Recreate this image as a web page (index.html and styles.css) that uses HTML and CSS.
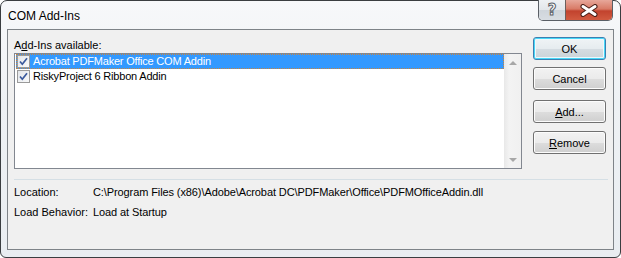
FILE: index.html
```html
<!DOCTYPE html>
<html lang="en">
<head>
  <meta charset="UTF-8" />
  <title>COM Add-Ins</title>
  <link rel="stylesheet" href="styles.css">
</head>
<body>
  <div class="window">
    <div class="titlebar">
      <span class="caption">COM Add-Ins</span>
    </div>
    <div class="caption-buttons">
      <div class="cap-btn help"><span>?</span></div>
      <div class="cap-btn close">
        <svg width="20" height="13" viewBox="0 0 20 13">
          <path d="M4 2.5 L16 10.5 M16 2.5 L4 10.5" stroke="#4a1f17" stroke-width="5" stroke-linecap="round"/>
          <path d="M4 2.5 L16 10.5 M16 2.5 L4 10.5" stroke="#ffffff" stroke-width="3" stroke-linecap="round"/>
        </svg>
      </div>
    </div>

    <div class="client">
      <div class="top-row">
        <div class="list-col">
          <div class="label">A<u>d</u>d-Ins available:</div>
          <div class="listbox">
            <div class="items">
              <div class="item selected">
                <span class="check">
                  <svg width="11" height="11" viewBox="0 0 11 11"><path d="M2 5.5 L4.3 8.2 L9 2.2" fill="none" stroke="#3a5a9e" stroke-width="1.7"/></svg>
                </span>
                <span class="item-text">Acrobat PDFMaker Office COM Addin</span>
              </div>
              <div class="item">
                <span class="check">
                  <svg width="11" height="11" viewBox="0 0 11 11"><path d="M2 5.5 L4.3 8.2 L9 2.2" fill="none" stroke="#3a5a9e" stroke-width="1.7"/></svg>
                </span>
                <span class="item-text">RiskyProject 6 Ribbon Addin</span>
              </div>
            </div>
            <div class="scrollbar">
              <div class="arrow up"></div>
              <div class="arrow down"></div>
            </div>
          </div>
        </div>
        <div class="btn-col">
          <button class="btn default">OK</button>
          <button class="btn cancel">Cancel</button>
          <button class="btn add"><u>A</u>dd...</button>
          <button class="btn remove"><u>R</u>emove</button>
        </div>
      </div>

      <div class="separator"></div>

      <div class="info">
        <span>Location:</span>
        <span class="value">C:\Program Files (x86)\Adobe\Acrobat DC\PDFMaker\Office\PDFMOfficeAddin.dll</span>
        <span>Load Behavior:</span>
        <span class="value">Load at Startup</span>
      </div>
    </div>
  </div>
</body>
</html>
```

FILE: styles.css
```css
body {
  margin: 0;
  background: #ffffff;
  font-family: "Liberation Sans", Arial, sans-serif;
  font-size: 11px;
  color: #000000;
}
.window {
  position: relative;
  width: 621px;
  height: 258px;
  box-sizing: border-box;
  border: 1px solid #3a3d40;
  border-radius: 7px 7px 6px 6px;
  background: linear-gradient(to bottom, #f7f8fa 0%, #eef1f4 40%, #e9edf1 100%);
  padding: 0 6px 7px 6px;
  display: flex;
  flex-direction: column;
}
.titlebar {
  height: 28px;
  display: flex;
  align-items: center;
  padding: 2px 0 0 1px;
  box-sizing: border-box;
}
.caption {
  font-size: 12px;
  color: #000000;
  text-shadow: 0 0 6px #ffffff, 0 0 3px #ffffff;
}
.caption-buttons {
  position: absolute;
  top: -1px;
  right: 7px;
  display: flex;
  height: 20px;
  border: 1px solid #5a5f66;
  border-top: none;
  border-radius: 0 0 5px 5px;
  overflow: hidden;
}
.cap-btn {
  display: flex;
  align-items: center;
  justify-content: center;
  box-sizing: border-box;
}
.help {
  width: 27px;
  background: linear-gradient(to bottom, #eef1f4 0%, #e2e6ea 50%, #cfd5db 51%, #d8dde2 100%);
  border-right: 1px solid #6b5f5c;
}
.help span {
  font-family: "DejaVu Sans", sans-serif;
  font-weight: bold;
  font-size: 15px;
  line-height: 15px;
  color: #ffffff;
  -webkit-text-stroke: 1px #5b6169;
}
.close {
  width: 46px;
  background: linear-gradient(to bottom, #e7a79a 0%, #d87a66 45%, #c2432e 55%, #d15a40 100%);
}
.client {
  flex: 1;
  border: 1px solid #7e8388;
  background: #f0f0f0;
  padding: 7px 7px 0 6px;
  display: flex;
  flex-direction: column;
}
.top-row {
  display: flex;
}
.list-col {
  width: 508px;
  display: flex;
  flex-direction: column;
}
.label {
  line-height: 15px;
  margin-top: 1px;
}
.listbox {
  height: 116px;
  box-sizing: border-box;
  border: 1px solid #828790;
  background: #ffffff;
  display: flex;
}
.items {
  flex: 1;
  padding-left: 1px;
}
.item {
  height: 15px;
  box-sizing: border-box;
  display: flex;
  align-items: center;
  border: 1px solid transparent;
}
.item.selected {
  background: #3399ff;
  border: 1px dotted #c9843c;
  color: #ffffff;
}
.check {
  width: 13px;
  height: 13px;
  box-sizing: border-box;
  border: 1px solid #9a9a9a;
  background: linear-gradient(135deg, #e3e6ea 0%, #f8f9fa 100%);
  display: flex;
  align-items: center;
  justify-content: center;
}
.item-text {
  margin-left: 3px;
  line-height: 13px;
  letter-spacing: -0.2px;
}
.scrollbar {
  width: 17px;
  background: linear-gradient(to right, #e8e8e8 0%, #f3f3f3 30%, #f0f0f0 100%);
  display: flex;
  flex-direction: column;
  justify-content: space-between;
}
.arrow {
  height: 17px;
  display: flex;
  align-items: center;
  justify-content: center;
}
.arrow::before {
  content: "";
  border-left: 4px solid transparent;
  border-right: 4px solid transparent;
}
.arrow.up::before {
  border-bottom: 4px solid #a7a7a7;
}
.arrow.down::before {
  border-top: 4px solid #a7a7a7;
}
.btn-col {
  margin-left: 11px;
  display: flex;
  flex-direction: column;
}
.btn {
  width: 73px;
  height: 23px;
  padding: 0;
  font-family: inherit;
  font-size: 11px;
  color: #000000;
  border: 1px solid #707070;
  border-radius: 3px;
  background: linear-gradient(to bottom, #f2f2f2 0%, #ebebeb 50%, #dddddd 51%, #cfcfcf 100%);
  box-shadow: inset 0 0 0 1px #fcfcfc;
}
.btn.default {
  border-color: #3c7fb1;
  box-shadow: inset 0 0 0 1px #48d8f8, inset 0 0 0 2px #eef8fc;
  background: linear-gradient(to bottom, #f0f4f6 0%, #e6ecef 50%, #d6dde2 51%, #cad3d8 100%);
}
.btn.cancel {
  margin-top: 7px;
}
.btn.add {
  margin-top: 10px;
}
.btn.remove {
  margin-top: 8px;
}
.separator {
  height: 1px;
  margin: 10px -2px 0 0;
  background: #d5dfe5;
}
.info {
  margin-top: 2px;
  display: grid;
  grid-template-columns: 79px auto;
  line-height: 20px;
}
.value {
  letter-spacing: -0.1px;
}
```
